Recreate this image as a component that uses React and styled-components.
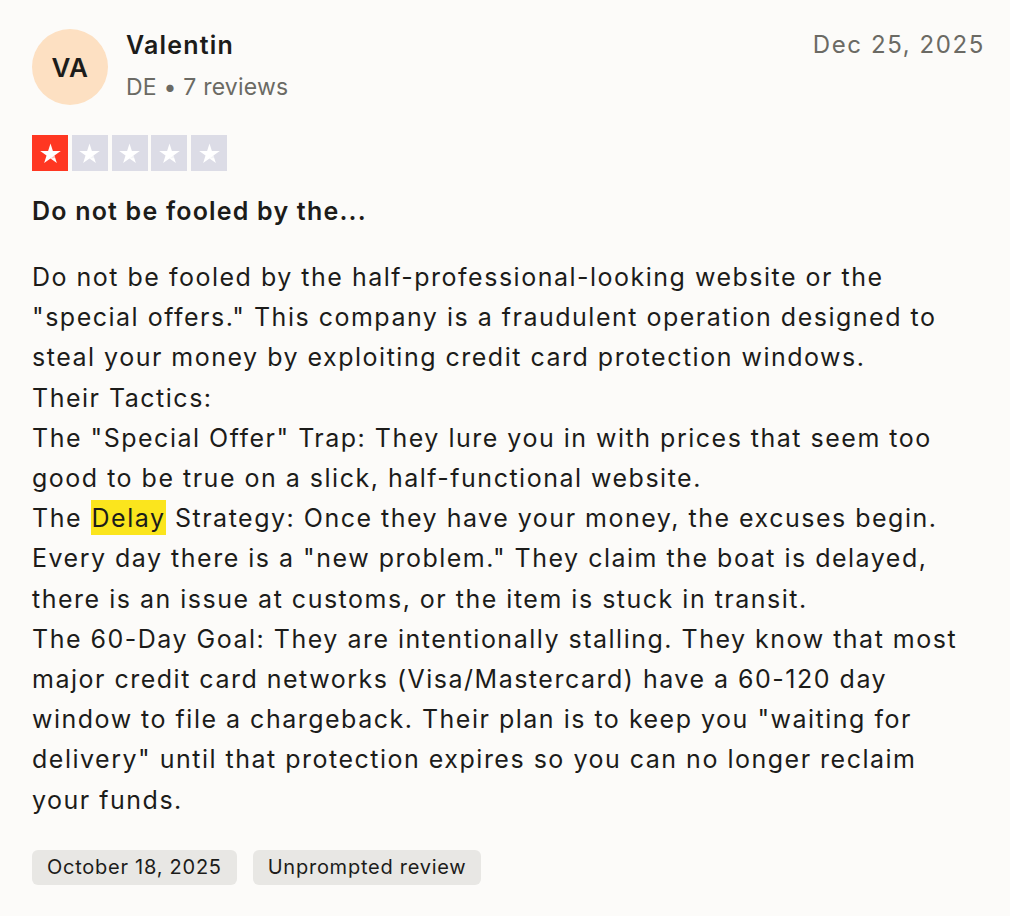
import React from "react";
import styled, { createGlobalStyle } from "styled-components";

const GlobalStyle = createGlobalStyle`
  html, body {
    margin: 0;
    padding: 0;
    background: #fcfbf9;
  }
  body {
    font-family: Inter, "Noto Sans", sans-serif;
    color: #1c1c1a;
    -webkit-font-smoothing: antialiased;
  }
`;

const lines = [
  "Do not be fooled by the half-professional-looking website or the",
  "\"special offers.\" This company is a fraudulent operation designed to",
  "steal your money by exploiting credit card protection windows.",
  "Their Tactics:",
  "The \"Special Offer\" Trap: They lure you in with prices that seem too",
  "good to be true on a slick, half-functional website.",
  "DELAY",
  "Every day there is a \"new problem.\" They claim the boat is delayed,",
  "there is an issue at customs, or the item is stuck in transit.",
  "The 60-Day Goal: They are intentionally stalling. They know that most",
  "major credit card networks (Visa/Mastercard) have a 60-120 day",
  "window to file a chargeback. Their plan is to keep you \"waiting for",
  "delivery\" until that protection expires so you can no longer reclaim",
  "your funds.",
];

const Star = ({ filled }) => (
  <StarBox $filled={filled}>
    <svg width="25" height="25" viewBox="0 0 24 24">
      <path
        d="M12 2.4l2.3 7.2h7.6l-6.1 4.4 2.3 7.2L12 16.8l-6.1 4.4 2.3-7.2-6.1-4.4h7.6z"
        fill="#fff"
      />
      <path d="M15.8 14l0.7 2.2-4.5 0.6z" fill={filled ? "#ff3722" : "#dcdce6"} opacity="0.3" />
    </svg>
  </StarBox>
);

export default function App() {
  return (
    <>
      <GlobalStyle />
      <Card>
        <Header>
          <Avatar>VA</Avatar>
          <Who>
            <Name>Valentin</Name>
            <Meta>DE • 7 reviews</Meta>
          </Who>
          <PostDate>Dec 25, 2025</PostDate>
        </Header>
        <Stars>
          <Star filled />
          <Star />
          <Star />
          <Star />
          <Star />
        </Stars>
        <Title>Do not be fooled by the...</Title>
        <Body>
          {lines.map((l, i) =>
            l === "DELAY" ? (
              <Line key={i}>
                The <Mark>Delay</Mark> Strategy: Once they have your money, the excuses begin.
              </Line>
            ) : (
              <Line key={i}>{l}</Line>
            )
          )}
        </Body>
        <Tags>
          <Tag>October 18, 2025</Tag>
          <Tag>Unprompted review</Tag>
        </Tags>
      </Card>
    </>
  );
}

const Card = styled.div`
  padding: 29px 25px 30px 32px;
`;

const Header = styled.div`
  display: flex;
  align-items: flex-start;
`;

const Avatar = styled.div`
  width: 76px;
  height: 76px;
  border-radius: 50%;
  background: #fde0c2;
  display: flex;
  align-items: center;
  justify-content: center;
  font-size: 26px;
  font-weight: 600;
  letter-spacing: 0.5px;
  color: #1c1c1a;
  flex-shrink: 0;
`;

const Who = styled.div`
  margin-left: 18px;
  display: flex;
  flex-direction: column;
`;

const Name = styled.div`
  font-size: 25px;
  font-weight: 600;
  line-height: 32px;
  letter-spacing: 1.2px;
`;

const Meta = styled.div`
  font-size: 23px;
  line-height: 32px;
  margin-top: 10px;
  letter-spacing: 0.2px;
  color: #6b6a64;
`;

const PostDate = styled.div`
  margin-left: auto;
  font-size: 24px;
  line-height: 32px;
  color: #6b6a64;
  letter-spacing: 1.6px;
`;

const Stars = styled.div`
  display: flex;
  gap: 3.75px;
  margin-top: 30px;
`;

const StarBox = styled.div`
  width: 36px;
  height: 36px;
  background: ${(p) => (p.$filled ? "#ff3722" : "#dcdce6")};
  display: flex;
  align-items: center;
  justify-content: center;
`;

const Title = styled.h2`
  margin: 24px 0 0;
  font-size: 25px;
  font-weight: 600;
  line-height: 32px;
  letter-spacing: 1.2px;
`;

const Body = styled.div`
  margin-top: 30px;
  font-size: 25px;
  line-height: 40.2px;
  letter-spacing: 1.5px;
  color: #1c1c1a;
`;

const Line = styled.div`
  white-space: nowrap;
`;

const Mark = styled.span`
  background: #fbe51d;
  padding: 3px 1px 2px;
`;

const Tags = styled.div`
  display: flex;
  gap: 16px;
  margin-top: 30px;
`;

const Tag = styled.div`
  background: #e8e7e4;
  border-radius: 6px;
  height: 35px;
  padding: 0 15px;
  display: flex;
  align-items: center;
  font-size: 20px;
  letter-spacing: 0.75px;
  color: #1c1c1a;
`;
